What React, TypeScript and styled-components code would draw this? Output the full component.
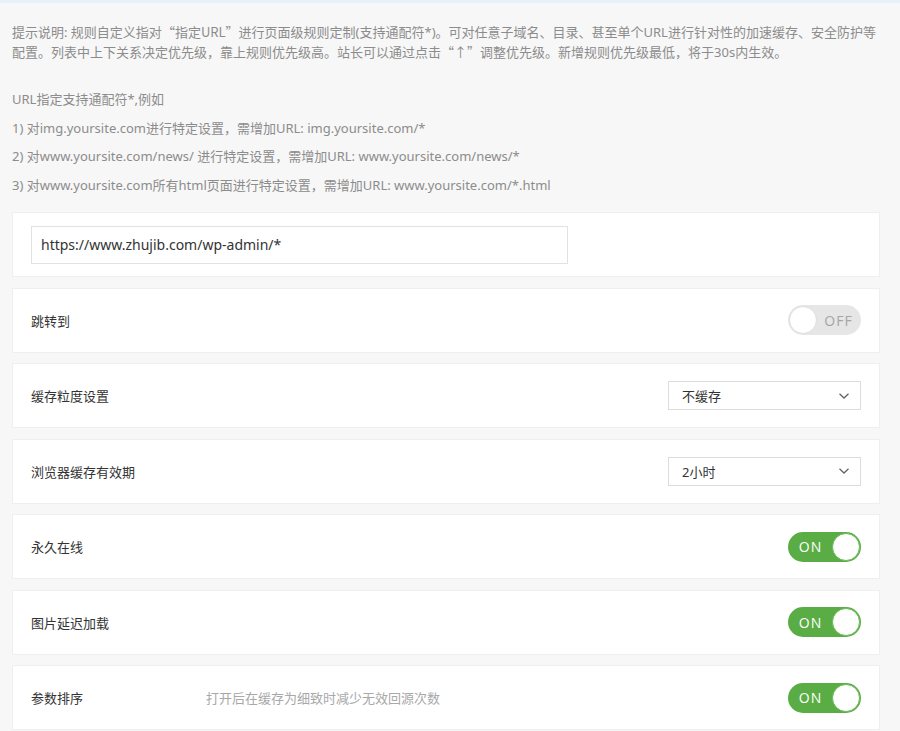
import React from 'react'
import styled, { createGlobalStyle } from 'styled-components'

const GlobalStyle = createGlobalStyle`
  body {
    margin: 0;
    background: #f7f7f7;
    font-family: 'Noto Sans', 'Noto Sans CJK SC', sans-serif;
  }
`

//#region s
const TopBar = styled.div`
  height: 3px;
  background: #e6f1fb;
`

const Page = styled.div`
  padding: 0 20px 0 12px;
`

const Intro = styled.p`
  margin: 19px 0 0;
  max-width: 866px;
  font-size: 13px;
  line-height: 20px;
  color: #8c8c8c;
`

const Quote = styled.span`
  font-family: 'Noto Sans CJK SC', sans-serif;
`

const Examples = styled.div`
  margin-top: 23px;
  font-size: 13px;
  line-height: 28.5px;
  color: #8c8c8c;
`

const List = styled.div`
  margin-top: 13px;
  display: flex;
  flex-direction: column;
  gap: 10.5px;
`

const Card = styled.div`
  height: 65px;
  box-sizing: border-box;
  background: #fff;
  border: 1px solid #efefef;
  padding: 0 18px;
  display: flex;
  align-items: center;
`

const Label = styled.span`
  width: 175px;
  font-size: 13px;
  color: #333;
`

const Hint = styled.span`
  flex: 1;
  font-size: 13px;
  color: #a8a8a8;
`

const Spacer = styled.div`
  flex: 1;
`

const UrlInput = styled.div`
  width: 537px;
  height: 38px;
  box-sizing: border-box;
  border: 1px solid #e2e2e2;
  padding: 0 9px;
  display: flex;
  align-items: center;
  font-size: 14px;
  color: #333;
`

const Select = styled.div`
  width: 193px;
  height: 29px;
  box-sizing: border-box;
  border: 1px solid #dcdcdc;
  padding: 0 10px 0 13px;
  display: flex;
  align-items: center;
  justify-content: space-between;
  font-size: 13px;
  color: #333;
`

const SwitchTrack = styled.div<{ $on: boolean }>`
  width: 73px;
  height: 30px;
  box-sizing: border-box;
  border-radius: 15px;
  background: ${(p) => (p.$on ? '#5aad45' : '#e6e6e6')};
  display: flex;
  flex-direction: ${(p) => (p.$on ? 'row' : 'row-reverse')};
  align-items: center;
  justify-content: space-between;
  padding: 1px;
`

const SwitchText = styled.span<{ $on: boolean }>`
  flex: 1;
  text-align: center;
  font-family: 'Open Sans', sans-serif;
  font-size: 14px;
  letter-spacing: 1px;
  color: ${(p) => (p.$on ? '#fff' : '#a5a5a5')};
`

const Knob = styled.div<{ $on: boolean }>`
  width: 28px;
  height: 28px;
  box-sizing: border-box;
  border-radius: 50%;
  background: #fff;
  border: 1px solid ${(p) => (p.$on ? '#6bbb57' : '#dedede')};
`
//#endregion

const Switch = ({ on }: { on: boolean }) => (
  <SwitchTrack $on={on}>
    <SwitchText $on={on}>{on ? 'ON' : 'OFF'}</SwitchText>
    <Knob $on={on} />
  </SwitchTrack>
)

const Chevron = () => (
  <svg width='12' height='8' viewBox='0 0 12 8'>
    <path d='M1.5 1.8 L6 6 L10.5 1.8' fill='none' stroke='#666' strokeWidth='1.3' />
  </svg>
)

const App = () => {
  return (
    <>
      <GlobalStyle />
      <TopBar />
      <Page>
        <Intro>
          提示说明: 规则自定义指对<Quote>“指定URL”</Quote>进行页面级规则定制(支持通配符*)。可对任意子域名、目录、甚至单个URL进行针对性的加速缓存、安全防护等配置。列表中上下关系决定优先级，靠上规则优先级高。站长可以通过点击<Quote>“↑”</Quote>调整优先级。新增规则优先级最低，将于30s内生效。
        </Intro>
        <Examples>
          <div>URL指定支持通配符*,例如</div>
          <div>1) 对img.yoursite.com进行特定设置，需增加URL: img.yoursite.com/*</div>
          <div>2) 对www.yoursite.com/news/ 进行特定设置，需增加URL: www.yoursite.com/news/*</div>
          <div>3) 对www.yoursite.com所有html页面进行特定设置，需增加URL: www.yoursite.com/*.html</div>
        </Examples>
        <List>
          <Card>
            <UrlInput>https://www.zhujib.com/wp-admin/*</UrlInput>
          </Card>
          <Card>
            <Label>跳转到</Label>
            <Spacer />
            <Switch on={false} />
          </Card>
          <Card>
            <Label>缓存粒度设置</Label>
            <Spacer />
            <Select>
              不缓存
              <Chevron />
            </Select>
          </Card>
          <Card>
            <Label>浏览器缓存有效期</Label>
            <Spacer />
            <Select>
              2小时
              <Chevron />
            </Select>
          </Card>
          <Card>
            <Label>永久在线</Label>
            <Spacer />
            <Switch on />
          </Card>
          <Card>
            <Label>图片延迟加载</Label>
            <Spacer />
            <Switch on />
          </Card>
          <Card>
            <Label>参数排序</Label>
            <Hint>打开后在缓存为细致时减少无效回源次数</Hint>
            <Switch on />
          </Card>
        </List>
      </Page>
    </>
  )
}

export default App
